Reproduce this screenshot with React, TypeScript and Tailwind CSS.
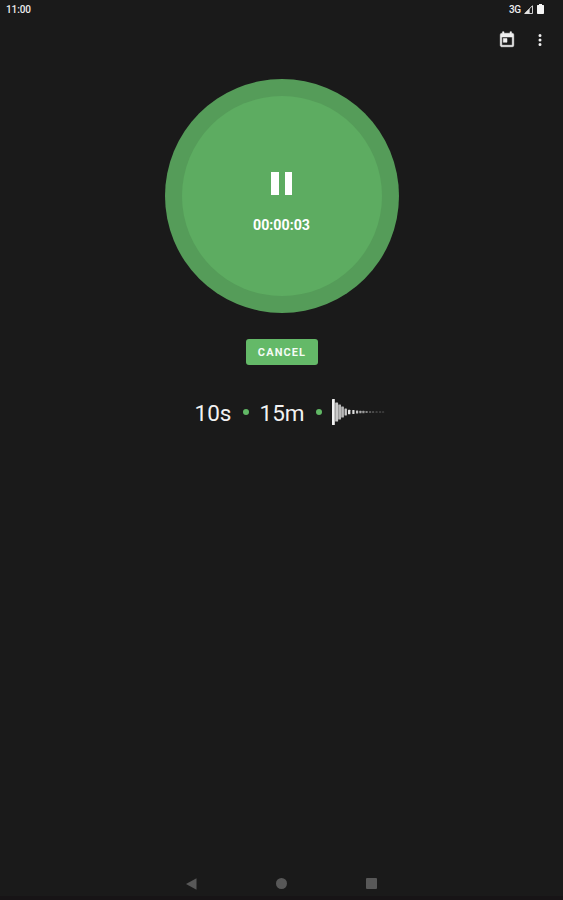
const bars = [
  { x: 0, h: 26, w: 2.8, c: "#f2f2f2" },
  { x: 3.2, h: 19, w: 2.9, c: "#c9c9c9" },
  { x: 6.2, h: 15, w: 2.8, c: "#b8b8b8" },
  { x: 9.2, h: 11, w: 2.7, c: "#b8b8b8" },
  { x: 12.5, h: 7, w: 2.4, c: "#c9c9c9" },
  { x: 16, h: 4.6, w: 2.4, c: "#e6e6e6" },
  { x: 20.3, h: 4, w: 2.2, c: "#dddddd" },
  { x: 24, h: 3.2, w: 2.2, c: "#c2c2c2" },
  { x: 27.3, h: 2.6, w: 2.2, c: "#a8a8a8" },
  { x: 30.3, h: 2.4, w: 2.2, c: "#999999" },
  { x: 33.5, h: 2, w: 2.2, c: "#858585" },
  { x: 37, h: 1.7, w: 2.2, c: "#6c6c6c" },
  { x: 40, h: 1.5, w: 2.2, c: "#5c5c5c" },
  { x: 43.5, h: 1.3, w: 2.2, c: "#4e4e4e" },
  { x: 47, h: 1.3, w: 2.2, c: "#484848" },
  { x: 50, h: 1.3, w: 2.2, c: "#424242" },
];

function StatusBar() {
  return (
    <div className="flex h-[18px] w-full items-center justify-between pr-[19px] pl-[6px] text-[10px] leading-none font-medium text-[#ededed]">
      <span className="pt-[2px] tracking-[-0.1px]">11:00</span>
      <div className="flex items-center">
        <span className="pt-[2px] tracking-[-0.2px]">3G</span>
        <svg className="ml-[3px]" width="9" height="9" viewBox="0 0 9 9">
          <path d="M.8 8.5 8.5.7V8.5z" fill="none" stroke="#e4e4e4" strokeWidth=".9" />
          <path d="M.3 8.8 5.6 3.5V8.8z" fill="#e4e4e4" />
        </svg>
        <svg className="ml-[4px]" width="7" height="10" viewBox="0 0 7 10">
          <path d="M2 0h3v1h1.4q.6 0 .6.6v7.6q0 .8-.8.8H.8Q0 10 0 9.200V1.600Q0 1 .6 1H2z" fill="#f5f5f5" />
        </svg>
      </div>
    </div>
  );
}

function Toolbar() {
  return (
    <div className="flex h-[43px] w-full items-center justify-end gap-[15px] pr-[14px]">
      <svg width="18" height="18" viewBox="0 0 24 24" fill="#f0f0f0" stroke="#f0f0f0" strokeWidth=".7">
        <path d="M19 3h-1V1h-2v2H8V1H6v2H5a2 2 0 0 0-2 2v14c0 1.100.9 2 2 2h14a2 2 0 0 0 2-2V5a2 2 0 0 0-2-2zm0 16H5V8h14v11zM7 10h5v5H7z" />
      </svg>
      <svg width="18" height="18" viewBox="0 0 24 24" fill="#f0f0f0">
        <path d="M12 8a2 2 0 1 0 0-4 2 2 0 0 0 0 4zm0 2a2 2 0 1 0 0 4 2 2 0 0 0 0-4zm0 6a2 2 0 1 0 0 4 2 2 0 0 0 0-4z" />
      </svg>
    </div>
  );
}

export default function App() {
  return (
    <div className="flex h-[900px] w-[563px] flex-col items-center bg-[#1a1a1a] font-['Roboto','Liberation_Sans',sans-serif]">
      <StatusBar />
      <Toolbar />
      <button className="mt-[18px] flex size-[234px] shrink-0 items-center justify-center rounded-full bg-[#559c59]">
        <span className="flex size-[200px] flex-col items-center rounded-full bg-[#5dac61] pt-[76px]">
          <span className="flex h-[23px] gap-[6px]">
            <span className="w-[7.500px] bg-white" />
            <span className="w-[7.500px] bg-white" />
          </span>
          <span className="mt-[20px] text-[14.200px] leading-[20px] font-bold text-white">00:00:03</span>
        </span>
      </button>
      <button className="mt-[26px] flex h-[26px] w-[72px] shrink-0 items-center justify-center rounded-[3px] bg-[#64b968] pt-[2px] pl-px text-[11px] font-bold tracking-[1.1px] text-[#f4fbf4]">
        CANCEL
      </button>
      <div className="mt-[32px] ml-[17px] flex h-[30px] items-center text-[22.500px] leading-[30px] text-[#f2f2f2]">
        <span className="w-[37px] pt-[2px]">10s</span>
        <span className="mx-[11px] size-[6px] rounded-full bg-[#61b865]" />
        <span className="w-[45px] pt-[2px]">15m</span>
        <span className="mr-[10px] ml-[11px] size-[6px] rounded-full bg-[#61b865]" />
        <svg width="54" height="28" viewBox="0 0 54 28">
          {bars.map((b) => (
            <rect key={b.x} x={b.x} y={14 - b.h / 2} width={b.w} height={b.h} rx=".5" fill={b.c} />
          ))}
        </svg>
      </div>
      <div className="mt-auto flex h-[32px] w-full items-center justify-center gap-[79px] border-b-4 border-[#171416] pt-[3px] pr-px">
        <svg width="11" height="12" viewBox="0 0 11 12">
          <path d="M0 6 10.500.3V11.700z" fill="#585858" />
        </svg>
        <span className="size-[11px] rounded-full bg-[#585858]" />
        <span className="size-[11px] rounded-[1px] bg-[#585858]" />
      </div>
    </div>
  );
}
